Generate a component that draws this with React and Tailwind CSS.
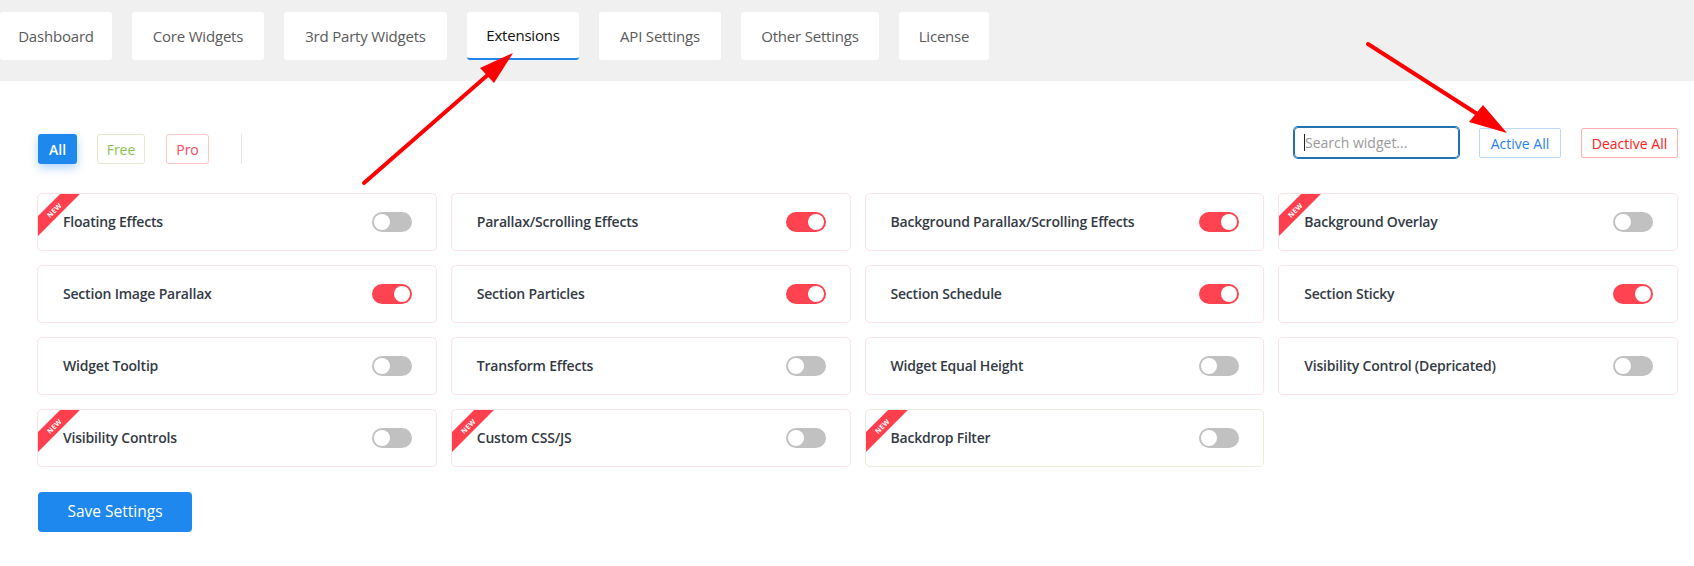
import React from "react";

const tabs = [
  { label: "Dashboard", w: "w-[112px]" },
  { label: "Core Widgets", w: "w-[132px]" },
  { label: "3rd Party Widgets", w: "w-[163px]" },
  { label: "Extensions", w: "w-[112px]", active: true },
  { label: "API Settings", w: "w-[122px]" },
  { label: "Other Settings", w: "w-[138px]" },
  { label: "License", w: "w-[90px]" },
];

const items = [
  { name: "Floating Effects", isNew: true, on: false },
  { name: "Parallax/Scrolling Effects", on: true },
  { name: "Background Parallax/Scrolling Effects", on: true },
  { name: "Background Overlay", isNew: true, on: false },
  { name: "Section Image Parallax", on: true },
  { name: "Section Particles", on: true },
  { name: "Section Schedule", on: true },
  { name: "Section Sticky", on: true },
  { name: "Widget Tooltip", on: false },
  { name: "Transform Effects", on: false },
  { name: "Widget Equal Height", on: false },
  { name: "Visibility Control (Depricated)", on: false },
  { name: "Visibility Controls", isNew: true, on: false },
  { name: "Custom CSS/JS", isNew: true, on: false },
  { name: "Backdrop Filter", isNew: true, on: false, free: true },
];

function Toggle({ on }) {
  return (
    <div
      className={
        "relative w-[40px] h-[20px] rounded-full shrink-0 " +
        (on ? "bg-[#ff4351]" : "bg-[#c1c1c1]")
      }
    >
      <div
        className={
          "absolute top-[2px] w-[16px] h-[16px] rounded-full bg-white " +
          (on ? "right-[2px]" : "left-[2px]")
        }
      />
    </div>
  );
}

function Card({ item }) {
  return (
    <div
      className={
        "relative overflow-hidden h-[58px] rounded-[5px] border bg-white flex items-center justify-between pl-[25px] pr-[24px] " +
        (item.free ? "border-[#e9efdc]" : "border-[#fde2e6]")
      }
    >
      {item.isNew && (
        <div className="absolute left-[-14px] top-[9px] w-[60px] h-[14px] bg-[#ff3f4e] -rotate-45 flex items-center justify-center text-white text-[7px] font-bold leading-none tracking-[0.2px]">
          NEW
        </div>
      )}
      <span className="text-[14px] font-semibold text-[#333a44] leading-none tracking-[-0.2px]">
        {item.name}
      </span>
      <Toggle on={item.on} />
    </div>
  );
}

export default function App() {
  return (
    <div className="relative w-[1694px] h-[566px] bg-white font-['Open_Sans',sans-serif] overflow-hidden">
      {/* Tab bar */}
      <div className="h-[81px] bg-[#f0f0f0] flex items-start gap-[20px] pt-[12px]">
        {tabs.map((t) => (
          <div
            key={t.label}
            className={
              t.w +
              " h-[48px] bg-white rounded-[3px] flex items-center justify-center text-[15px] font-medium tracking-[-0.2px] " +
              (t.active
                ? "text-[#111] border-b-2 border-[#2186ea]"
                : "text-[#5a5a5a]")
            }
          >
            {t.label}
          </div>
        ))}
      </div>

      {/* Content */}
      <div className="pl-[37px] pr-[16px] pt-[46px]">
        <div className="flex items-start justify-between">
          <div className="flex items-center mt-[7px] pl-[1px]">
            <button className="w-[39px] h-[30px] rounded-[3px] bg-[#1e88ee] text-white text-[14px] font-semibold shadow-[0_4px_10px_rgba(30,136,238,0.35)]">
              All
            </button>
            <button className="ml-[20px] w-[48px] h-[30px] rounded-[3px] border border-[#e4ead0] text-[#8cc152] text-[14px] font-medium">
              Free
            </button>
            <button className="ml-[21px] w-[43px] h-[30px] rounded-[3px] border border-[#ffc6c9] text-[#ff4757] text-[14px] font-medium">
              Pro
            </button>
            <div className="ml-[32px] w-px h-[30px] bg-[#e6e6e6]" />
          </div>

          <div className="flex items-start gap-[20px]">
            <div className="w-[165px] h-[31px] rounded-[4px] border border-[#2271b1] shadow-[0_0_0_1px_#2271b1] flex items-center pl-[9px]">
              <span className="w-px h-[17px] bg-[#222]" />
              <span className="text-[14px] text-[#9a9a9a]">Search widget...</span>
            </div>
            <button className="mt-[1px] w-[82px] h-[30px] rounded-[2px] border border-[#b9daf8] text-[#2b7ff0] text-[14px] font-medium">
              Active All
            </button>
            <button className="mt-[1px] w-[97px] h-[30px] rounded-[2px] border border-[#ffb1b1] text-[#ff2020] text-[14px] font-medium">
              Deactive All
            </button>
          </div>
        </div>

        <div className="grid grid-cols-4 gap-[14px] mt-[29px]">
          {items.map((it) => (
            <Card key={it.name} item={it} />
          ))}
        </div>

        <button className="mt-[25px] ml-[1px] w-[154px] h-[40px] rounded-[4px] bg-[#1e88ee] text-white text-[15.5px] font-medium">
          Save Settings
        </button>
      </div>

      {/* Annotation arrows */}
      <svg
        className="absolute inset-0 pointer-events-none"
        width="1694"
        height="566"
        viewBox="0 0 1694 566"
      >
        <line x1="364" y1="183" x2="490" y2="73" stroke="#ff0000" strokeWidth="4" strokeLinecap="round" />
        <polygon points="513,53 480,68 494,83" fill="#ff0000" />
        <line x1="1368" y1="44" x2="1482" y2="117" stroke="#ff0000" strokeWidth="4" strokeLinecap="round" />
        <polygon points="1507,133 1469,122 1483,105" fill="#ff0000" />
      </svg>
    </div>
  );
}
